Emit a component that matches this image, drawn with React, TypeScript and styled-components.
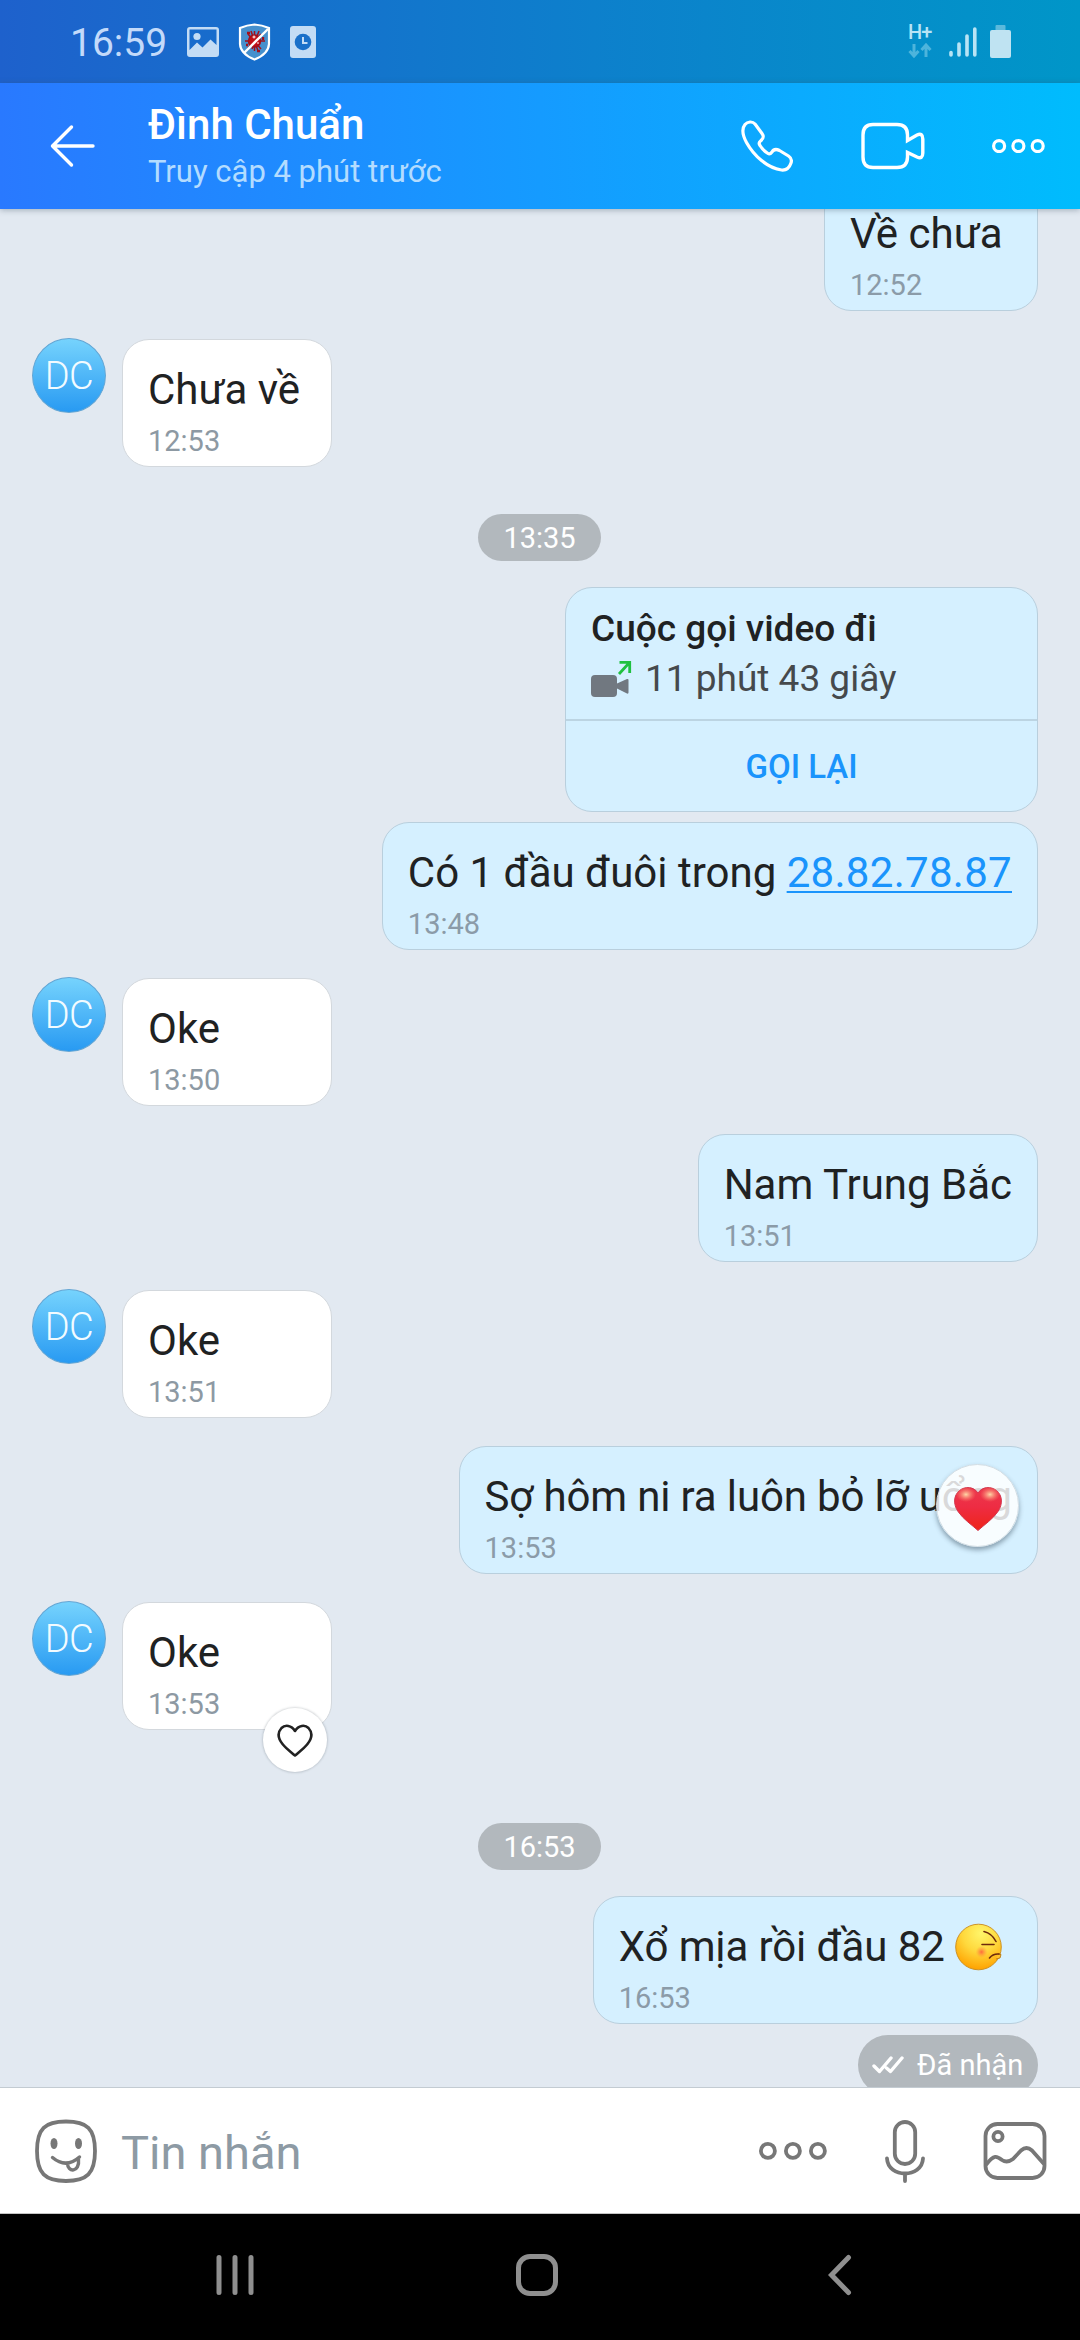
import React from "react";
import styled, { createGlobalStyle, css } from "styled-components";

const Global = createGlobalStyle`
  * { box-sizing: border-box; }
  body { margin: 0; background: #000; font-family: Roboto, "Noto Sans", sans-serif; }
`;

const Screen = styled.main`
  width: 1080px;
  height: 2340px;
  display: flex;
  flex-direction: column;
  overflow: hidden;
  background: #e2e9f1;
`;

const StatusBar = styled.div`
  height: 83px;
  flex: none;
  display: flex;
  align-items: center;
  padding: 0 69px 0 70px;
  background: linear-gradient(90deg, #1e61cc 0%, #0d80cc 55%, #0096c8 100%);
`;

const Clock = styled.span`
  font-size: 39px;
  line-height: 48px;
  width: 117px;
  padding-top: 2px;
  color: #c3dafa;
  white-space: nowrap;
`;

const StatusIcons = styled.div`
  display: flex;
  align-items: center;
  gap: 19px;
  flex: 1;
`;

const SignalGroup = styled.div`
  display: flex;
  align-items: center;
`;

const Network = styled.div`
  display: flex;
  flex-direction: column;
  width: 41px;
  gap: 3px;
  color: #b8e4f5;
  font-size: 20px;
  line-height: 15px;
  font-weight: 500;
  letter-spacing: -1px;
`;

const Header = styled.header`
  height: 126px;
  flex: none;
  display: flex;
  align-items: center;
  padding: 0 35px 0 50px;
  background: linear-gradient(90deg, #2979ff 0%, #159bff 50%, #00bcfd 100%);
  box-shadow: 0 1px 6px rgba(60, 80, 100, 0.4);
  z-index: 1;
`;

const Contact = styled.div`
  flex: 1;
  display: flex;
  flex-direction: column;
  padding-left: 52px;
`;

const ContactName = styled.h1`
  margin: 0;
  font-size: 42px;
  line-height: 51px;
  font-weight: 500;
  color: #fff;
`;

const ContactStatus = styled.span`
  font-size: 31px;
  line-height: 43px;
  color: #b3dcff;
`;

const Chat = styled.section`
  height: 1878px;
  flex: none;
  display: flex;
  flex-direction: column;
  overflow: hidden;
  padding: 0 42px 0 32px;
`;

const Row = styled.div<{ $mine?: boolean; $gap?: number }>`
  flex: none;
  display: flex;
  align-items: flex-start;
  gap: 16px;
  margin-top: ${(p) => p.$gap ?? 28}px;
  ${(p) => p.$mine && css`justify-content: flex-end;`}
`;

const Avatar = styled.div`
  width: 74px;
  height: 75px;
  margin-top: -1px;
  border-radius: 50%;
  border: 1px solid #64a6d4;
  background: linear-gradient(#76d3fd, #289af2);
  display: flex;
  align-items: center;
  justify-content: center;
  color: #f2fbff;
  font-size: 38px;
  font-weight: 300;
  letter-spacing: -0.5px;
`;

const Bubble = styled.div<{ $mine?: boolean }>`
  position: relative;
  height: 128px;
  min-width: ${(p) => (p.$mine ? 214 : 210)}px;
  padding: 25px 25px 0;
  border-radius: 27px;
  border: 1px solid ${(p) => (p.$mine ? "#b9cfdd" : "#d3d8dd")};
  background: ${(p) => (p.$mine ? "#d5f0ff" : "#fff")};
`;

const Message = styled.div<{ $tracking?: number }>`
  display: flex;
  align-items: center;
  height: 50px;
  font-size: 42px;
  line-height: 50px;
  letter-spacing: ${(p) => p.$tracking ?? 0}px;
  color: #1f2223;
  white-space: pre;
`;

const NumberLink = styled.a`
  color: #1a94fc;
  text-decoration: underline;
  text-decoration-thickness: 2px;
  text-underline-offset: 4px;
  text-decoration-skip-ink: none;
  letter-spacing: 0.3px;
`;

const Time = styled.div<{ $mine?: boolean }>`
  margin-top: 9px;
  font-size: 29px;
  line-height: 34px;
  color: ${(p) => (p.$mine ? "#8b9ba8" : "#8d99a3")};
`;

const LoveBadge = styled.div`
  position: absolute;
  right: 18px;
  top: 17px;
  width: 83px;
  height: 83px;
  padding-top: 6px;
  border-radius: 50%;
  background: rgba(255, 255, 255, 0.83);
  border: 1px solid #d3dde3;
  box-shadow: 0 3px 5px rgba(40, 60, 75, 0.45);
  display: flex;
  align-items: center;
  justify-content: center;
`;

const LikeButton = styled.div`
  position: absolute;
  right: 4px;
  top: 105px;
  width: 64px;
  height: 64px;
  border-radius: 50%;
  background: #fff;
  box-shadow: 0 0 2px 1px rgba(70, 80, 90, 0.2);
  display: flex;
  align-items: center;
  justify-content: center;
`;

const TimePill = styled.div<{ $gap: number }>`
  flex: none;
  align-self: center;
  /* the list padding is uneven, so the pill is nudged back to the screen's middle */
  margin: ${(p) => p.$gap}px 0 0 9px;
  width: 123px;
  height: 47px;
  border-radius: 24px;
  background: #b2b8bd;
  color: #fff;
  font-size: 29px;
  line-height: 48px;
  text-align: center;
`;

const CallCard = styled.div`
  width: 473px;
  height: 225px;
  border-radius: 27px;
  border: 1px solid #b9cfdd;
  background: #d5f0ff;
  display: flex;
  flex-direction: column;
`;

const CallInfo = styled.div`
  height: 133px;
  padding: 19px 25px 0;
  border-bottom: 2px solid #bcd4e2;
`;

const CallTitle = styled.div`
  font-size: 37px;
  line-height: 44px;
  font-weight: 500;
  color: #1f2223;
`;

const CallDuration = styled.div`
  display: flex;
  align-items: center;
  margin-top: 6px;
  gap: 12px;
  font-size: 37px;
  line-height: 44px;
  color: #45494c;
`;

const CallBack = styled.div`
  flex: 1;
  display: flex;
  align-items: center;
  justify-content: center;
  font-size: 33px;
  font-weight: 500;
  color: #1a94fc;
`;

const Receipt = styled.div`
  flex: none;
  align-self: flex-end;
  margin-top: 11px;
  width: 180px;
  height: 60px;
  padding-left: 14px;
  border-radius: 30px;
  background: #b2b8bd;
  color: #fff;
  display: flex;
  align-items: center;
  gap: 13px;
  font-size: 29px;
  white-space: nowrap;
`;

const Composer = styled.footer`
  height: 127px;
  flex: none;
  display: flex;
  align-items: center;
  padding: 1px 33px 0 34px;
  border-top: 1px solid #c3cbd2;
  border-bottom: 1px solid #c4c4c4;
  background: #fff;
`;

const Placeholder = styled.span`
  flex: 1;
  padding: 4px 0 0 23px;
  font-size: 47px;
  line-height: 56px;
  color: #8d9aa4;
`;

const Tools = styled.div<{ $gap: number }>`
  display: flex;
  align-items: center;
  gap: ${(p) => p.$gap}px;
`;

const NavBar = styled.nav`
  flex: 1;
  display: grid;
  grid-template-columns: 301px 313px 26px;
  align-items: center;
  padding: 0 226px 4px 214px;
  background: #000;
`;

const PictureIcon = () => (
  <svg width="32" height="30" viewBox="0 0 32 30">
    <path fillRule="evenodd" fill="#c3dcf5" d="M3 0H29Q32 0 32 3V27Q32 30 29 30H3Q0 30 0 27V3Q0 0 3 0ZM2.500 2.500V23L10 15.500L15.500 20.500L23.500 12.500L29.500 18V2.500Z" />
    <circle cx="10" cy="9.500" r="3.600" fill="#c3dcf5" />
  </svg>
);

const ShieldIcon = () => (
  <svg width="33" height="38" viewBox="0 0 33 38">
    <path d="M16.500 1.500Q24 2 31 5V21Q30.500 31 16.500 36.500Q2.500 31 2 21V5Q9 2 16.500 1.500Z" fill="#4690cd" stroke="#fff" strokeWidth="2.200" />
    <g stroke="#a30f1b" strokeWidth="1.500">
      <path d="M16.500 8V28M7 18H27M10 11L23 26M23 11L10 25M13 8L20 28M21 8L14 26" />
      <circle cx="16.500" cy="18" r="6" fill="#c01018" />
    </g>
    <path d="M19 28h3M9 10h3M8 22h2M25 14v3" stroke="#a30f1b" strokeWidth="2.400" />
    <path d="M14.500 14h3M16 12.500v3M19 20h2" stroke="#fff" />
    <path d="M30 6L6 30" stroke="#fff" strokeWidth="2.400" />
  </svg>
);

const ClockDocIcon = () => (
  <svg width="26" height="32" viewBox="0 0 26 32">
    <rect width="26" height="32" rx="3" fill="#c3dcf5" />
    <circle cx="13" cy="16" r="8.300" fill="#1a70c9" />
    <path d="M13 11V17H17.500" stroke="#c3dcf5" strokeWidth="2" fill="none" />
  </svg>
);

const DataArrows = () => (
  <svg width="24" height="15" viewBox="0 0 24 15" fill="none" stroke="#4db4dc" strokeWidth="3">
    <path d="M6 1V12M1.500 8L6 13L10.500 8M18 14V3M13.500 7L18 2L22.500 7" />
  </svg>
);

const SignalIcon = () => (
  <svg width="28" height="32" viewBox="0 0 28 32" stroke="#b8e4f5" strokeWidth="3.600" strokeLinecap="round">
    <path d="M2 26.500V29M10 18V29M18 10V29M25.800 3V29" />
  </svg>
);

const BatteryIcon = () => (
  <svg width="21" height="34" viewBox="0 0 21 34">
    <rect x="5.500" y="0" width="10" height="6" rx="1" fill="#5bb9dc" />
    <rect y="5" width="21" height="28" rx="2" fill="#bfe3f2" />
  </svg>
);

const BackIcon = () => (
  <svg width="46" height="44" viewBox="0 0 46 44" fill="none" stroke="#fff" strokeWidth="3.400" strokeLinecap="round" strokeLinejoin="round">
    <path d="M21.500 3L2.500 22L21.500 41M2.500 22H43" />
  </svg>
);

const PhoneIcon = () => (
  <svg width="52" height="52" viewBox="0 0 52 52" fill="none" stroke="#fff" strokeWidth="3.200" strokeLinejoin="round">
    <path d="M4 4.500C6.500 1.500 11.500 1 14 4L21 13.500C23.500 17 22 19 19.500 21C17.500 22.500 18 24 19 25.500C21.500 29.500 24.500 32 27 33.500C28.500 34.500 29.500 34 31 32C32.500 29.500 35.500 29 38.500 30.500L47.500 36C50.500 38 51 40 50 43C48.500 47.500 45.500 50.500 40.500 50C26.500 48 13 36 5.500 22.500C2 16 0 9.500 4 4.500Z" />
  </svg>
);

const VideoIcon = () => (
  <svg width="64" height="48" viewBox="0 0 64 48" fill="none" stroke="#fff" strokeWidth="3.400">
    <path d="M12 2.500H36Q46.500 2.500 46.500 13V18.500L56 13Q61.800 10.500 61.800 17V31Q61.800 37.500 56 35L46.500 30.500V35Q46.500 45.500 36 45.500H12Q2 45.500 2 35V13Q2 2.500 12 2.500Z" />
  </svg>
);

const MoreIcon = ({ step, r, color, stroke }: { step: number; r: number; color: string; stroke: number }) => {
  const edge = r + stroke / 2;
  const width = step * 2 + edge * 2;
  return (
    <svg width={width} height={edge * 2} fill="none" stroke={color} strokeWidth={stroke}>
      {[0, 1, 2].map((i) => (
        <circle key={i} cx={edge + i * step} cy={edge} r={r} />
      ))}
    </svg>
  );
};

const OutgoingVideoIcon = () => (
  <svg width="42" height="44" viewBox="0 0 42 44">
    <rect y="18" width="26" height="22" rx="4" fill="#717880" />
    <path d="M26 26.500L36 22Q37.500 21.500 37.500 23V35.500Q37.500 37 36 36.500L26 31.500Z" fill="#717880" />
    <path d="M28 17L38.500 5.500M28.500 5.300H38.700V16" fill="none" stroke="#1fc140" strokeWidth="2.800" />
  </svg>
);

const RedHeart = () => (
  <svg width="50" height="46" viewBox="0 0 50 46">
    <defs>
      <linearGradient id="heartBody" x1="0" y1="0" x2="0" y2="1">
        <stop offset="0" stopColor="#ec3a4e" />
        <stop offset="0.450" stopColor="#ee2c43" />
        <stop offset="1" stopColor="#ee2418" />
      </linearGradient>
      <radialGradient id="heartShine">
        <stop offset="0" stopColor="#ffd9a8" />
        <stop offset="1" stopColor="#ff8a70" stopOpacity="0" />
      </radialGradient>
    </defs>
    <path d="M25 7C29 0.500 38 0 43.500 4.500C49.500 9.500 50 18 45 25.500C40 33 31 39 25 44.500C19 39 10 33 5 25.500C0 18 0.500 9.500 6.500 4.500C12 0 21 0.500 25 7Z" fill="url(#heartBody)" stroke="#d3354c" strokeWidth="1" />
    <ellipse cx="13" cy="8.500" rx="10" ry="7.500" fill="url(#heartShine)" />
    <ellipse cx="37" cy="8.500" rx="10" ry="7.500" fill="url(#heartShine)" />
  </svg>
);

const OutlineHeart = () => (
  <svg width="36" height="33" viewBox="0 0 36 33" fill="none" stroke="#222" strokeWidth="2.600" strokeLinejoin="round">
    <path d="M18 7C14.500 1 8 0.500 4.500 4C0 9 1.500 15 5.500 20C9 24.500 14 28 18 31.500C22 28 27 24.500 30.500 20C34.500 15 36 9 31.500 4C28 0.500 21.500 1 18 7Z" />
  </svg>
);

const EmojiSlot = styled.span`
  display: flex;
  margin-right: 10px;
`;

const FaceEmoji = () => (
  <EmojiSlot>
    <svg width="47" height="48" viewBox="0 0 47 48">
      <defs>
        <radialGradient id="face" cx="0.550" cy="0.200" r="0.800">
          <stop offset="0" stopColor="#fff56a" />
          <stop offset="0.500" stopColor="#ffd83c" />
          <stop offset="1" stopColor="#ffa200" />
        </radialGradient>
        <radialGradient id="blush">
          <stop offset="0" stopColor="#ff6a3c" />
          <stop offset="1" stopColor="#ff9a3c" stopOpacity="0" />
        </radialGradient>
      </defs>
      <circle cx="23.500" cy="24" r="22.800" fill="url(#face)" stroke="#c98a1a" strokeWidth="0.900" />
      <path d="M43 31L46 31.500L45 35L41 36" fill="#ffc32e" stroke="#b87810" strokeWidth="0.900" />
      <circle cx="26.500" cy="29" r="6" fill="url(#blush)" />
      <path d="M29 8.500Q37 10.500 41 18.500M27 21.500H39M34.500 35Q38 30.500 44 31" fill="none" stroke="#6e2a0c" strokeWidth="1.600" strokeLinecap="round" />
    </svg>
  </EmojiSlot>
);

const DoubleCheck = () => (
  <svg width="32" height="20" viewBox="0 0 32 20" fill="none" stroke="#fff" strokeWidth="3.400" strokeLinecap="round" strokeLinejoin="round">
    <path d="M2 11L7.500 16.500L19 3M14.500 13L18.500 16.500L30 3" />
  </svg>
);

const StickerIcon = () => (
  <svg width="64" height="64" viewBox="0 0 64 64" fill="none" stroke="#777" strokeWidth="3.800" strokeLinecap="round">
    <path d="M32 2.500C53 2.500 61 9.500 61 32S53 62 32 62S3 54.500 3 32S11 2.500 32 2.500Z" />
    <path d="M18.500 38.500Q32 50 45.500 38M33.500 44C33.500 54 46 53.500 44.500 40.500" strokeWidth="3.400" />
    <g fill="#777" stroke="none">
      <ellipse cx="20" cy="24.500" rx="3.500" ry="5.500" />
      <ellipse cx="44.500" cy="24.500" rx="3.500" ry="5.500" />
    </g>
  </svg>
);

const MicIcon = () => (
  <svg width="42" height="64" viewBox="0 0 42 64" fill="none" stroke="#777" strokeWidth="3.800" strokeLinecap="round">
    <rect x="10.800" y="3" width="20.400" height="42" rx="10.200" />
    <path d="M3 39.500C4 59.500 38 59.500 39 39.500M21 55V62" />
  </svg>
);

const GalleryIcon = () => (
  <svg width="64" height="60" viewBox="0 0 64 60" fill="none" stroke="#777" strokeWidth="3.800" strokeLinejoin="round">
    <rect x="2.500" y="3" width="59" height="54" rx="12" />
    <circle cx="15" cy="15.500" r="4.600" />
    <path d="M3 44C11 33 14 35 19 39Q24 42.500 30 38L38 29.500Q43.500 24.500 49 29.500L61 43" />
  </svg>
);

const RecentsIcon = () => (
  <svg width="42" height="42" viewBox="0 0 42 42" stroke="#8f8f8f" strokeWidth="5" strokeLinecap="round">
    <path d="M5 3.500V38.500M21 3.500V38.500M37 3.500V38.500" />
  </svg>
);

const HomeIcon = () => (
  <svg width="44" height="44" viewBox="0 0 44 44" fill="none" stroke="#8f8f8f" strokeWidth="5">
    <rect x="3.500" y="3.500" width="37" height="37" rx="11.500" />
  </svg>
);

const NavBackIcon = () => (
  <svg width="26" height="42" viewBox="0 0 26 42" fill="none" stroke="#8f8f8f" strokeWidth="5" strokeLinecap="round">
    <path d="M20.500 3.500L3.500 21L20.500 38.500" />
  </svg>
);

type TextProps = {
  time: string;
  children: React.ReactNode;
  gap?: number;
  tracking?: number;
  badge?: React.ReactNode;
};

const Incoming = ({ time, children, gap, badge }: TextProps) => (
  <Row $gap={gap}>
    <Avatar>DC</Avatar>
    <Bubble>
      <Message>{children}</Message>
      <Time>{time}</Time>
      {badge}
    </Bubble>
  </Row>
);

const Outgoing = ({ time, children, gap, tracking, badge }: TextProps) => (
  <Row $mine $gap={gap}>
    <Bubble $mine>
      <Message $tracking={tracking}>{children}</Message>
      <Time $mine>{time}</Time>
      {badge}
    </Bubble>
  </Row>
);

export default function App() {
  return (
    <Screen>
      <Global />
      <StatusBar>
        <Clock>16:59</Clock>
        <StatusIcons>
          <PictureIcon />
          <ShieldIcon />
          <ClockDocIcon />
        </StatusIcons>
        <SignalGroup>
          <Network>
            <span>H+</span>
            <DataArrows />
          </Network>
          <Tools $gap={13}>
            <SignalIcon />
            <BatteryIcon />
          </Tools>
        </SignalGroup>
      </StatusBar>
      <Header>
        <BackIcon />
        <Contact>
          <ContactName>Đình Chuẩn</ContactName>
          <ContactStatus>Truy cập 4 phút trước</ContactStatus>
        </Contact>
        <Tools $gap={67.5}>
          <PhoneIcon />
          <VideoIcon />
          <MoreIcon step={19.300} r={5.500} color="#fff" stroke={3.200} />
        </Tools>
      </Header>
      <Chat>
        <Outgoing time="12:52" gap={-26}>Về chưa</Outgoing>
        <Incoming time="12:53">Chưa về</Incoming>
        <TimePill $gap={47}>13:35</TimePill>
        <Row $mine $gap={26}>
          <CallCard>
            <CallInfo>
              <CallTitle>Cuộc gọi video đi</CallTitle>
              <CallDuration>
                <OutgoingVideoIcon />
                11 phút 43 giây
              </CallDuration>
            </CallInfo>
            <CallBack>GỌI LẠI</CallBack>
          </CallCard>
        </Row>
        <Outgoing time="13:48" gap={10}>
          Có 1 đầu đuôi trong <NumberLink>28.82.78.87</NumberLink>
        </Outgoing>
        <Incoming time="13:50">Oke</Incoming>
        <Outgoing time="13:51">Nam Trung Bắc</Outgoing>
        <Incoming time="13:51">Oke</Incoming>
        <Outgoing time="13:53" tracking={-0.15} badge={<LoveBadge><RedHeart /></LoveBadge>}>
          Sợ hôm ni ra luôn bỏ lỡ uổng
        </Outgoing>
        <Incoming time="13:53" badge={<LikeButton><OutlineHeart /></LikeButton>}>Oke</Incoming>
        <TimePill $gap={93}>16:53</TimePill>
        <Outgoing time="16:53" gap={26} tracking={-0.1}>
          Xổ mịa rồi đầu 82 <FaceEmoji />
        </Outgoing>
        <Receipt>
          <DoubleCheck />
          Đã nhận
        </Receipt>
      </Chat>
      <Composer>
        <StickerIcon />
        <Placeholder>Tin nhắn</Placeholder>
        <Tools $gap={57}>
          <MoreIcon step={25} r={7} color="#777" stroke={3.800} />
          <MicIcon />
          <GalleryIcon />
        </Tools>
      </Composer>
      <NavBar>
        <RecentsIcon />
        <HomeIcon />
        <NavBackIcon />
      </NavBar>
    </Screen>
  );
}
